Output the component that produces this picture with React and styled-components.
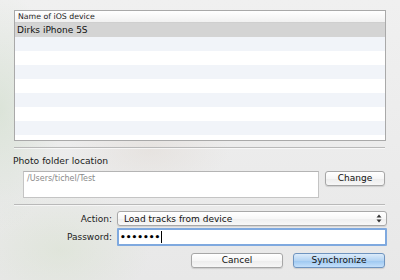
import React from 'react'
import styled, { createGlobalStyle } from 'styled-components'

const GlobalStyle = createGlobalStyle`
  html, body {
    margin: 0;
    padding: 0;
    background: #e9e9e9;
  }
  body {
    font-family: "DejaVu Sans", "Liberation Sans", sans-serif;
    color: #1a1a1a;
  }
`

const rows = ['Dirks iPhone 5S', '', '', '', '', '', '', '', '']

const Sheet = styled.div`
  width: 400px;
  height: 280px;
  box-sizing: border-box;
  padding: 10px 14px 0 14px;
  display: flex;
  flex-direction: column;
  overflow: hidden;
  background:
    radial-gradient(ellipse 60px 120px at 0px 110px, rgba(205, 220, 200, 0.55), rgba(205, 220, 200, 0)),
    radial-gradient(ellipse 90px 60px at 60px 250px, rgba(215, 225, 205, 0.5), rgba(215, 225, 205, 0)),
    radial-gradient(ellipse 80px 40px at 150px 150px, rgba(225, 218, 212, 0.5), rgba(225, 218, 212, 0)),
    linear-gradient(#f0f0f0, #e8e8e8);
`

const Table = styled.div`
  height: 131px;
  box-sizing: border-box;
  border: 1px solid #a9a9a9;
  background: #fff;
  overflow: hidden;
  display: flex;
  flex-direction: column;
`

const HeaderCell = styled.div`
  height: 12px;
  flex: none;
  box-sizing: border-box;
  border-bottom: 1px solid #cfcfcf;
  background: linear-gradient(#ffffff, #f1f1f1);
  font-size: 7.8px;
  line-height: 11px;
  padding-left: 3px;
  color: #222;
`

const Row = styled.div`
  height: 14px;
  flex: none;
  font-size: 9px;
  line-height: 14px;
  padding-left: 2px;
  color: #111;
  background: ${p => (p.$selected ? '#d4d4d4' : p.$odd ? '#f1f4f9' : '#ffffff')};
`

const Divider = styled.div`
  height: 1px;
  flex: none;
  background: #b9b9b9;
  box-shadow: 0 1px 0 rgba(255, 255, 255, 0.6);
  margin-top: ${p => p.$top}px;
  margin-right: 1px;
`

const SectionLabel = styled.div`
  font-size: 9.2px;
  line-height: 12px;
  margin-top: 7px;
  margin-left: -1px;
  color: #1c1c1c;
`

const FolderRow = styled.div`
  display: flex;
  align-items: flex-start;
  gap: 6px;
  margin-top: 4px;
  padding-left: 9px;
`

const PathField = styled.div`
  width: 296px;
  height: 27px;
  box-sizing: border-box;
  border: 1px solid #c4c4c4;
  border-top-color: #b4b4b4;
  background: #fff;
  font-size: 8px;
  line-height: 10px;
  padding: 2px 3px;
  color: #8a8a8a;
`

const PushButton = styled.div`
  width: ${p => p.$w}px;
  height: 15px;
  box-sizing: border-box;
  border: 1px solid ${p => (p.$primary ? '#6f94bf' : '#a6a6a6')};
  border-radius: 3px;
  background: ${p =>
    p.$primary
      ? 'linear-gradient(#dcebfa, #b4d4f3 50%, #9cc7f0 51%, #c4e0fb)'
      : 'linear-gradient(#ffffff, #f6f6f6 50%, #ececec 51%, #f7f7f7)'};
  box-shadow: 0 1px 1px rgba(0, 0, 0, 0.12);
  font-size: 9px;
  line-height: 13px;
  text-align: center;
  color: #111;
`

const FormGrid = styled.div`
  display: grid;
  grid-template-columns: 98px 1fr;
  column-gap: 5px;
  row-gap: 2px;
  align-items: center;
  margin-top: 6px;
  margin-right: -1px;
`

const FieldLabel = styled.div`
  font-size: 9px;
  text-align: right;
  color: #1c1c1c;
`

const Popup = styled.div`
  height: 15px;
  box-sizing: border-box;
  border: 1px solid #a8a8a8;
  border-radius: 3px;
  background: linear-gradient(#ffffff, #f7f7f7 50%, #eeeeee 51%, #f8f8f8);
  box-shadow: 0 1px 1px rgba(0, 0, 0, 0.1);
  display: flex;
  align-items: center;
  justify-content: space-between;
  padding: 0 4px 0 6px;
  font-size: 9px;
  color: #111;
`

const PasswordField = styled.div`
  height: 18px;
  box-sizing: border-box;
  border: 2px solid #7fa9df;
  border-radius: 1px;
  background: #fff;
  display: flex;
  align-items: center;
  padding-left: 1px;
  font-size: 9px;
  font-weight: bold;
  color: #000;
`

const Caret = styled.span`
  width: 1px;
  height: 12px;
  background: #000;
  margin-left: 1px;
`

const ButtonRow = styled.div`
  display: flex;
  justify-content: flex-end;
  gap: 10px;
  margin-top: 7px;
  margin-right: 1px;
`

const Stepper = () => (
  <svg width="6" height="9" viewBox="0 0 6 9">
    <path d="M3 0.5 L5.5 3.5 H0.5 Z" fill="#333" />
    <path d="M3 8.5 L5.5 5.5 H0.5 Z" fill="#333" />
  </svg>
)

export default function App() {
  return (
    <Sheet>
      <GlobalStyle />
      <Table>
        <HeaderCell>Name of iOS device</HeaderCell>
        {rows.map((r, i) => (
          <Row key={i} $selected={i === 0} $odd={i % 2 === 1}>
            {r}
          </Row>
        ))}
      </Table>
      <Divider $top={6} />
      <SectionLabel>Photo folder location</SectionLabel>
      <FolderRow>
        <PathField>/Users/tichel/Test</PathField>
        <PushButton $w={60}>Change</PushButton>
      </FolderRow>
      <Divider $top={6} />
      <FormGrid>
        <FieldLabel>Action:</FieldLabel>
        <Popup>
          <span>Load tracks from device</span>
          <Stepper />
        </Popup>
        <FieldLabel>Password:</FieldLabel>
        <PasswordField>
          •••••••
          <Caret />
        </PasswordField>
      </FormGrid>
      <ButtonRow>
        <PushButton $w={92}>Cancel</PushButton>
        <PushButton $w={92} $primary>Synchronize</PushButton>
      </ButtonRow>
    </Sheet>
  )
}
